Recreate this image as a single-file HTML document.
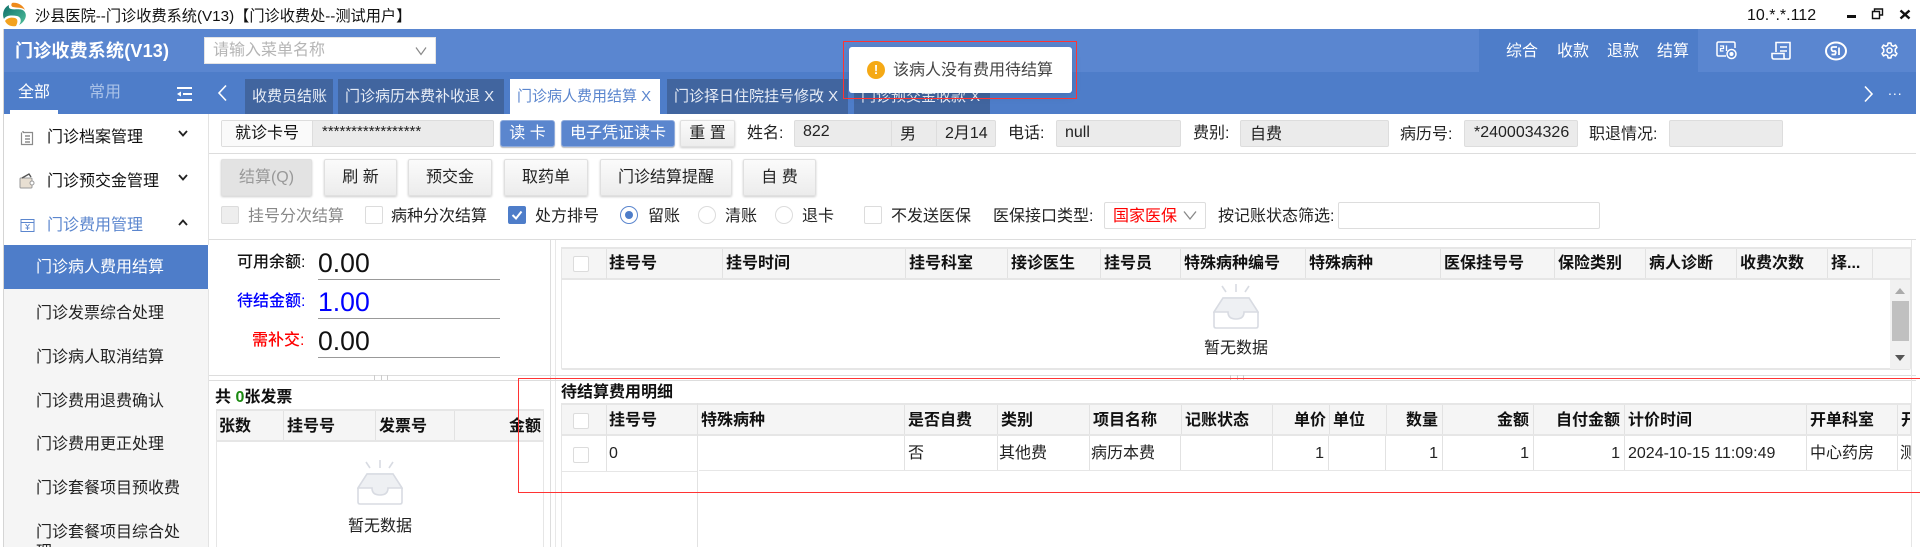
<!DOCTYPE html>
<html lang="zh"><head><meta charset="utf-8"><title>门诊收费系统</title>
<style>
html,body{margin:0;padding:0;width:1920px;height:547px;overflow:hidden;background:#fff}
body{position:relative;font:16px/20px "Liberation Sans","Noto Sans CJK SC",sans-serif;color:#222}
div,span,svg{position:absolute;box-sizing:border-box}
.t{white-space:nowrap;line-height:20px}
.b{font-weight:700;color:#111}
.w{color:#fff}
.tab{top:79px;height:35px;background:#41659f;color:#e8edf6;font-size:15px;line-height:35px;white-space:nowrap;padding-left:7px}
.f{top:120px;height:27px;background:#ebebeb;border:1px solid #ddd;border-radius:2px}
.bb{top:120px;height:27px;background:#5b86ce;border:1px solid #8fabdc;border-radius:3px;color:#fff;text-align:center;line-height:25px;box-shadow:0 1px 1px #bbb}
.g{top:159px;height:37px;border:1px solid #e0e0e0;border-radius:2px;background:linear-gradient(#fbfbfb,#ececec);text-align:center;line-height:35px;box-shadow:0 1px 2px #ccc}
.c{width:18px;height:18px;border:1px solid #dcdcdc;border-radius:2px;background:#fff}
.r{width:18px;height:18px;border:1px solid #dcdcdc;border-radius:50%;background:#fff}
.h{background:#f5f5f5;border:1px solid #e6e6e6;border-top:2px solid #e6e6e6;border-bottom:2px solid #e6e6e6}
.cell{top:0;bottom:0;border-right:1px solid #e2e2e2;font-weight:700;color:#111;padding-left:3px;white-space:nowrap;overflow:hidden}
.sm{left:4px;width:204px;height:44px;line-height:44px;padding-left:32px;white-space:nowrap;overflow:hidden}
.u{left:318px;width:182px;height:1px;background:#999}
.num{left:318px;font-size:26.6px;line-height:30px;white-space:nowrap}
.l{height:1px;background:#ddd}
.v{width:1px;background:#e2e2e2}
</style></head><body>

<!-- title bar -->
<svg style="left:2px;top:2px" width="25" height="25" viewBox="0 0 25 25">
<defs><linearGradient id="lg" x1="0" y1="0" x2="1" y2="1"><stop offset="0" stop-color="#0f6f6a"/><stop offset="1" stop-color="#4fbf9a"/></linearGradient></defs>
<path d="M7 3C1 6 0 13 2 17C4 13 10 13 15 14C19 15 20 19 17 23C23 20 26 13 22 9C19 6 13 8 9 7C7 6.500 6.500 5 7 3Z" fill="url(#lg)"/>
<path d="M10 1C15 0 21 3 23 8C20 5 15 6 11 5C9 4.500 9 2.500 10 1Z" fill="#ee8a1c"/>
<path d="M3 19C5 16 9 15 13 16C16 17 16 20 14 24C9 25 5 23 3 19Z" fill="#f3a21f"/>
</svg>
<div class="t" style="left:35px;top:7px;font-size:15.2px;color:#111">沙县医院--门诊收费系统(V13)【门诊收费处--测试用户】</div>
<div class="t" style="left:1747px;top:6px;font-size:16px;color:#111">10.*.*.112</div>
<div style="left:1847px;top:15px;width:9px;height:3px;background:#111"></div>
<svg style="left:1871px;top:8px" width="13" height="12"><path d="M3.500 3.500V1H11.500V7H9M1.500 3.500H8.500V10.500H1.500Z" fill="none" stroke="#111" stroke-width="1.400"/></svg>
<svg style="left:1899px;top:9px" width="12" height="11"><path d="M1.500 1.500L10.500 9.500M10.500 1.500L1.500 9.500" stroke="#111" stroke-width="2.400"/></svg>

<!-- left gray edge -->
<div style="left:3px;top:29px;width:1px;height:518px;background:#d5d5d5"></div>
<div style="left:4px;top:29px;width:1912px;height:43px;background:#5a86d0"></div>
<div style="left:4px;top:72px;width:1912px;height:42px;background:#4e7dc9"></div>
<div style="left:1479px;top:29px;width:219px;height:43px;background:#4e7dc9"></div>

<div class="t w" style="left:15px;top:41px;font-size:18px;font-weight:700;letter-spacing:.2px">门诊收费系统(V13)</div>
<div style="left:204px;top:37px;width:232px;height:27px;background:#fff;border:1px solid #e4e4e4"></div>
<div class="t" style="left:213px;top:41px;color:#b5b5b5">请输入菜单名称</div>
<svg style="left:414px;top:46px" width="14" height="10"><path d="M2 1.500L7 8.500L12 1.500" fill="none" stroke="#888" stroke-width="1.200"/></svg>

<div class="t w" style="left:1506px;top:42px">综合</div>
<div class="t w" style="left:1557px;top:42px">收款</div>
<div class="t w" style="left:1607px;top:42px">退款</div>
<div class="t w" style="left:1657px;top:42px">结算</div>

<!-- header icons -->
<svg style="left:1716px;top:41px" width="22" height="19" viewBox="0 0 22 19" fill="none" stroke="#fff" stroke-width="1.500">
<path d="M10 15H2.500Q1 15 1 13.500V2.500Q1 1 2.500 1H17.500Q19 1 19 2.500V7"/>
<path d="M4 5H7.500V7.500H4.500V10H7.500M10.500 4.500V10" stroke-width="1.300"/>
<circle cx="15.500" cy="13" r="4.500"/><circle cx="15.500" cy="13" r="1.300" fill="#fff"/>
</svg>
<svg style="left:1771px;top:41px" width="21" height="19" viewBox="0 0 21 19" fill="none" stroke="#fff" stroke-width="1.600">
<path d="M5 11V1.500H19V16.500Q19 18 17.500 18H3Q1 18 1 15.500V12.500H13V16.500Q13 18 15 18"/>
<path d="M9 6H16M9 10H16"/>
</svg>
<svg style="left:1825px;top:41px" width="22" height="20" viewBox="0 0 22 20" fill="none" stroke="#fff" stroke-width="2">
<ellipse cx="11" cy="10" rx="10" ry="8.500"/>
<path d="M12 6H8Q6 6 6.500 8.500T10 10Q11.500 11 10 13.500H6.500M14 6.500V14" stroke-width="1.800"/>
</svg>
<svg style="left:1881px;top:41px" width="17" height="19" viewBox="0 0 24 24" fill="none" stroke="#fff" stroke-width="2.200">
<circle cx="12" cy="12" r="3.500"/>
<path d="M10 1.500H14L14.800 4.800 17.500 6 20.400 4.300 22.500 7.700 20.200 10 20.200 14 22.500 16.300 20.400 19.700 17.500 18 14.800 19.200 14 22.500H10L9.200 19.200 6.500 18 3.600 19.700 1.500 16.300 3.800 14 3.800 10 1.500 7.700 3.600 4.300 6.500 6 9.200 4.800Z" stroke-linejoin="round"/>
</svg>

<!-- sidebar top -->
<div class="t w" style="left:18px;top:83px">全部</div>
<div class="t" style="left:89px;top:83px;color:#aac2e8">常用</div>
<div style="left:10px;top:110px;width:48px;height:4px;background:#fff"></div>
<svg style="left:177px;top:87px" width="16" height="14"><path d="M0 1H15M6 7H15M0 13H15" stroke="#fff" stroke-width="2"/><path d="M0 7L4 4.500V9.500Z" fill="#fff"/></svg>
<svg style="left:217px;top:84px" width="11" height="18"><path d="M9 1.500L2 9L9 16.500" fill="none" stroke="#fff" stroke-width="1.600"/></svg>

<!-- tabs -->
<div class="tab" style="left:245px;width:88px">收费员结账</div>
<div class="tab" style="left:338px;width:166px">门诊病历本费补收退 X</div>
<div class="tab" style="left:510px;width:150px;background:#fff;color:#5b86ce;padding-left:7px">门诊病人费用结算 X</div>
<div class="tab" style="left:667px;width:181px">门诊择日住院挂号修改 X</div>
<div class="tab" style="left:854px;width:136px">门诊预交金收款 X</div>
<svg style="left:1863px;top:85px" width="11" height="18"><path d="M2 1.500L9 9L2 16.500" fill="none" stroke="#fff" stroke-width="1.600"/></svg>
<div class="t w" style="left:1888px;top:80px;font-size:14px;letter-spacing:1px">...</div>

<!-- toast -->
<div style="left:849px;top:47px;width:223px;height:46px;background:#fff;border-radius:3px;box-shadow:0 2px 10px rgba(0,0,0,.12)"></div>
<div style="left:867px;top:61px;width:18px;height:18px;border-radius:50%;background:#f5a915;color:#fff;font:700 13px/18px 'Liberation Sans';text-align:center">!</div>
<div class="t" style="left:893px;top:61px;color:#444">该病人没有费用待结算</div>
<div style="left:843px;top:41px;width:234px;height:58px;border:1px solid #f33"></div>

<!-- sidebar -->
<div style="left:4px;top:114px;width:205px;height:131px;background:#fff;border-right:1px solid #e3e3e3"></div>
<div style="left:4px;top:245px;width:204px;height:44px;background:#4e7dc9"></div>
<div style="left:4px;top:289px;width:205px;height:258px;background:#f5f5f5;border-right:1px solid #e3e3e3"></div>

<svg style="left:20px;top:130px" width="14" height="16" fill="none" stroke="#777" stroke-width="1.200"><path d="M3 2.500H12.500V14.500H1.500V2.500" stroke="#8a8a8a"/><path d="M3 1V2.500M5 6H10M5 9H10M5 12H10" /></svg>
<svg style="left:19px;top:172px" width="16" height="17"><rect x="1" y="6" width="12" height="10" rx="1" fill="#e8dfd2" stroke="#999"/><path d="M3 6L10 2 12 5" fill="none" stroke="#555" stroke-width="1.400"/><circle cx="13" cy="11" r="2" fill="#fff" stroke="#999"/></svg>
<svg style="left:20px;top:218px" width="15" height="15" fill="none" stroke="#5b86ce"><rect x="1" y="1.500" width="13" height="12"/><path d="M1 4.500H14M5.500 6L7.500 8.500 9.500 6M7.500 8.500V12M5.500 10H9.500" stroke-width=".9"/></svg>

<div class="t" style="left:47px;top:128px;color:#111">门诊档案管理</div>
<div class="t" style="left:47px;top:172px;color:#111">门诊预交金管理</div>
<div class="t" style="left:47px;top:216px;color:#5b86ce">门诊费用管理</div>
<svg style="left:177px;top:129px" width="12" height="9"><path d="M2 2L6 6.500L10 2" fill="none" stroke="#222" stroke-width="1.800"/></svg>
<svg style="left:177px;top:173px" width="12" height="9"><path d="M2 2L6 6.500L10 2" fill="none" stroke="#222" stroke-width="1.800"/></svg>
<svg style="left:177px;top:218px" width="12" height="9"><path d="M2 7L6 2.500L10 7" fill="none" stroke="#222" stroke-width="1.800"/></svg>

<div class="sm w" style="top:247px;height:42px;line-height:42px">门诊病人费用结算</div>
<div class="sm" style="top:292px;color:#222">门诊发票综合处理</div>
<div class="sm" style="top:336px;color:#222">门诊病人取消结算</div>
<div class="sm" style="top:380px;color:#222">门诊费用退费确认</div>
<div class="sm" style="top:423px;color:#222">门诊费用更正处理</div>
<div class="sm" style="top:467px;color:#222">门诊套餐项目预收费</div>
<div class="sm" style="top:503px;height:44px;line-height:60px;color:#222">门诊套餐项目综合处</div>
<div class="t" style="left:36px;top:543px;color:#222">理</div>

<!-- row 1 -->
<div class="f" style="left:221px;width:273px;border-color:#ddd"></div>
<div style="left:222px;top:121px;width:91px;height:25px;background:#fafafa;border-right:1px solid #ddd;text-align:center;line-height:25px;color:#111">就诊卡号</div>
<div class="t" style="left:322px;top:124px;font-size:15px;color:#222;line-height:16px">*****************</div>
<div class="bb" style="left:500px;width:55px">读 卡</div>
<div class="bb" style="left:561px;width:114px">电子凭证读卡</div>
<div class="g" style="left:680px;top:120px;width:55px;height:27px;line-height:25px;color:#222">重 置</div>
<div class="t" style="left:747px;top:124px">姓名:</div>
<div class="f" style="left:794px;width:202px"></div>
<div class="v" style="left:891px;top:120px;height:27px;background:#ddd"></div>
<div class="v" style="left:936px;top:120px;height:27px;background:#ddd"></div>
<div class="t" style="left:803px;top:122px">822</div>
<div class="t" style="left:900px;top:125px">男</div>
<div class="t" style="left:945px;top:124px">2月14</div>
<div class="t" style="left:1008px;top:124px">电话:</div>
<div class="f" style="left:1056px;width:125px"></div>
<div class="t" style="left:1065px;top:123px">null</div>
<div class="t" style="left:1193px;top:124px">费别:</div>
<div class="f" style="left:1240px;width:149px"></div>
<div class="t" style="left:1250px;top:125px">自费</div>
<div class="t" style="left:1400px;top:125px">病历号:</div>
<div class="f" style="left:1464px;width:114px"></div>
<div class="t" style="left:1474px;top:123px">*2400034326</div>
<div class="t" style="left:1589px;top:125px">职退情况:</div>
<div class="f" style="left:1669px;width:114px"></div>
<div class="l" style="left:209px;top:153px;width:1707px"></div>

<!-- row 2 -->
<div class="g" style="left:221px;width:91px;background:#e3e3e3;color:#999">结算(Q)</div>
<div class="g" style="left:324px;width:73px">刷 新</div>
<div class="g" style="left:408px;width:84px">预交金</div>
<div class="g" style="left:504px;width:84px">取药单</div>
<div class="g" style="left:600px;width:132px">门诊结算提醒</div>
<div class="g" style="left:743px;width:73px">自 费</div>

<!-- row 3 -->
<div class="c" style="left:221px;top:206px;background:#eee"></div>
<div class="t" style="left:248px;top:207px;color:#888">挂号分次结算</div>
<div class="c" style="left:365px;top:206px"></div>
<div class="t" style="left:391px;top:207px">病种分次结算</div>
<div class="c" style="left:508px;top:206px;background:#4e7dc9;border-color:#4e7dc9"></div>
<svg style="left:508px;top:206px" width="18" height="18"><path d="M4.500 9L8 12.500L13.500 5.500" fill="none" stroke="#fff" stroke-width="2"/></svg>
<div class="t" style="left:535px;top:207px">处方排号</div>
<div class="r" style="left:620px;top:206px;border-color:#5b86ce"></div>
<div style="left:625px;top:211px;width:8px;height:8px;border-radius:50%;background:#4e7dc9"></div>
<div class="t" style="left:648px;top:207px">留账</div>
<div class="r" style="left:698px;top:206px"></div>
<div class="t" style="left:725px;top:207px">清账</div>
<div class="r" style="left:775px;top:206px"></div>
<div class="t" style="left:802px;top:207px">退卡</div>
<div class="c" style="left:864px;top:206px"></div>
<div class="t" style="left:891px;top:207px">不发送医保</div>
<div class="t" style="left:993px;top:207px">医保接口类型:</div>
<div style="left:1104px;top:202px;width:102px;height:27px;border:1px solid #ddd;border-radius:2px"></div>
<div class="t" style="left:1113px;top:207px;color:#f00">国家医保</div>
<svg style="left:1182px;top:210px" width="16" height="11"><path d="M2 1.500L8 9L14 1.500" fill="none" stroke="#888" stroke-width="1.300"/></svg>
<div class="t" style="left:1218px;top:207px">按记账状态筛选:</div>
<div style="left:1338px;top:202px;width:262px;height:27px;border:1px solid #ddd;border-radius:2px"></div>
<div class="l" style="left:209px;top:239px;width:1707px"></div>

<!-- split lines -->
<div class="v" style="left:550px;top:240px;height:307px;background:#ddd"></div>
<div class="v" style="left:555px;top:240px;height:307px;background:#e8e8e8"></div>
<div class="l" style="left:209px;top:375px;width:1707px"></div>
<div class="l" style="left:209px;top:380px;width:1707px"></div>
<div class="v" style="left:1911px;top:240px;height:307px;background:#e6e6e6"></div>
<div style="left:374px;top:375px;width:14px;height:5px;border-left:1px solid #ccc;border-right:1px solid #ccc;background:linear-gradient(90deg,transparent 6px,#ccc 6px,#ccc 7px,transparent 7px)"></div>
<div style="left:1230px;top:375px;width:14px;height:5px;border-left:1px solid #ccc;border-right:1px solid #ccc;background:linear-gradient(90deg,transparent 6px,#ccc 6px,#ccc 7px,transparent 7px)"></div>

<!-- left upper -->
<div class="t" style="left:237px;top:253px;color:#111;font-weight:500">可用余额:</div>
<div class="num" style="top:248px;color:#111">0.00</div>
<div class="u" style="top:279px"></div>
<div class="t" style="left:237px;top:292px;color:#00f;font-weight:500">待结金额:</div>
<div class="num" style="top:287px;color:#00f">1.00</div>
<div class="u" style="top:318px"></div>
<div class="t" style="left:252px;top:331px;color:#f00;font-weight:500">需补交:</div>
<div class="num" style="top:326px;color:#111">0.00</div>
<div class="u" style="top:357px"></div>

<!-- left lower -->
<div class="t b" style="left:215px;top:388px">共 <span style="position:static;color:#1a8a10">0</span>张发票</div>
<div style="left:216px;top:409px;width:328px;height:138px;border:1px solid #e6e6e6;border-bottom:0"></div>
<div class="h" style="left:216px;top:409px;width:328px;height:33px;line-height:31px">
<div class="cell" style="left:0;width:67px;padding-left:2px">张数</div>
<div class="cell" style="left:67px;width:92px">挂号号</div>
<div class="cell" style="left:159px;width:79px">发票号</div>
<div class="cell" style="left:238px;width:88px;border:0;text-align:right;padding-right:2px">金额</div>
</div>
<svg style="left:357px;top:459px" width="46" height="46" viewBox="0 0 46 46" fill="none" stroke="#d8dbe2" stroke-width="1.600">
<path d="M9 3L13 9M23 1V9M36 3L32 9" />
<path d="M10 15H36L45 29V43Q45 45 43 45H3Q1 45 1 43V29Z" fill="#fff"/>
<path d="M10 15H36L45 29H31Q31 36 23 36T15 29H1Z" fill="#eef0f3"/>
</svg>
<div class="t" style="left:348px;top:517px;color:#222">暂无数据</div>

<!-- right top table -->
<div style="left:561px;top:247px;width:1350px;height:123px;border:1px solid #e6e6e6;border-width:2px 1px;border-radius:2px"></div>
<div class="h" style="left:561px;top:247px;width:1350px;height:33px;line-height:29px">
<div class="cell" style="left:44px;width:117px">挂号号</div>
<div class="cell" style="left:161px;width:183px">挂号时间</div>
<div class="cell" style="left:344px;width:102px">挂号科室</div>
<div class="cell" style="left:446px;width:93px">接诊医生</div>
<div class="cell" style="left:539px;width:80px">挂号员</div>
<div class="cell" style="left:619px;width:125px">特殊病种编号</div>
<div class="cell" style="left:744px;width:135px">特殊病种</div>
<div class="cell" style="left:879px;width:114px">医保挂号号</div>
<div class="cell" style="left:993px;width:91px">保险类别</div>
<div class="cell" style="left:1084px;width:91px">病人诊断</div>
<div class="cell" style="left:1175px;width:91px">收费次数</div>
<div class="cell" style="left:1266px;width:45px">择...</div>
</div>
<div class="v" style="left:606px;top:249px;height:30px"></div>
<div class="c" style="left:573px;top:256px;width:16px;height:16px"></div>
<div style="left:1890px;top:280px;width:20px;height:89px;background:#f1f1f1"></div>
<div style="left:1892px;top:301px;width:17px;height:40px;background:#c0c0c0"></div>
<svg style="left:1895px;top:288px" width="10" height="7"><path d="M0 6H10L5 0Z" fill="#aaa"/></svg>
<svg style="left:1895px;top:355px" width="10" height="7"><path d="M0 0H10L5 6Z" fill="#555"/></svg>
<svg style="left:1213px;top:283px" width="46" height="46" viewBox="0 0 46 46" fill="none" stroke="#d8dbe2" stroke-width="1.600">
<path d="M9 3L13 9M23 1V9M36 3L32 9" />
<path d="M10 15H36L45 29V43Q45 45 43 45H3Q1 45 1 43V29Z" fill="#fff"/>
<path d="M10 15H36L45 29H31Q31 36 23 36T15 29H1Z" fill="#eef0f3"/>
</svg>
<div class="t" style="left:1204px;top:339px;color:#222">暂无数据</div>

<!-- right bottom table -->
<div class="t b" style="left:561px;top:383px">待结算费用明细</div>
<div class="h" style="left:561px;top:403px;width:1350px;height:33px;line-height:31px;overflow:hidden">
<div class="cell" style="left:44px;width:92px">挂号号</div>
<div class="cell" style="left:136px;width:207px">特殊病种</div>
<div class="cell" style="left:343px;width:93px">是否自费</div>
<div class="cell" style="left:436px;width:92px">类别</div>
<div class="cell" style="left:528px;width:92px">项目名称</div>
<div class="cell" style="left:620px;width:91px">记账状态</div>
<div class="cell" style="left:711px;width:57px;text-align:right;padding-right:3px">单价</div>
<div class="cell" style="left:768px;width:57px">单位</div>
<div class="cell" style="left:825px;width:56px;text-align:right;padding-right:4px">数量</div>
<div class="cell" style="left:881px;width:91px;text-align:right;padding-right:4px">金额</div>
<div class="cell" style="left:972px;width:91px;text-align:right;padding-right:4px">自付金额</div>
<div class="cell" style="left:1063px;width:182px">计价时间</div>
<div class="cell" style="left:1245px;width:91px">开单科室</div>
<div class="cell" style="left:1336px;width:13px">开单</div>
</div>
<div class="v" style="left:606px;top:405px;height:66px"></div>
<div class="c" style="left:573px;top:413px;width:16px;height:16px"></div>
<div class="c" style="left:573px;top:447px;width:16px;height:16px"></div>
<div class="l" style="left:561px;top:471px;width:136px;background:#e6e6e6"></div>
<div class="l" style="left:699px;top:470px;width:1212px;background:#e6e6e6"></div>
<div class="v" style="left:561px;top:436px;height:111px;background:#e6e6e6"></div>
<div class="v" style="left:697px;top:403px;height:144px"></div>
<div class="v" style="left:904px;top:436px;height:34px"></div>
<div class="v" style="left:997px;top:436px;height:34px"></div>
<div class="v" style="left:1089px;top:436px;height:34px"></div>
<div class="v" style="left:1180px;top:436px;height:34px"></div>
<div class="v" style="left:1272px;top:436px;height:34px"></div>
<div class="v" style="left:1328px;top:436px;height:34px"></div>
<div class="v" style="left:1385px;top:436px;height:34px"></div>
<div class="v" style="left:1442px;top:436px;height:34px"></div>
<div class="v" style="left:1533px;top:436px;height:34px"></div>
<div class="v" style="left:1624px;top:436px;height:34px"></div>
<div class="v" style="left:1806px;top:436px;height:34px"></div>
<div class="v" style="left:1897px;top:436px;height:34px"></div>
<div class="t" style="left:609px;top:444px">0</div>
<div class="t" style="left:908px;top:444px">否</div>
<div class="t" style="left:999px;top:444px">其他费</div>
<div class="t" style="left:1091px;top:444px">病历本费</div>
<div class="t" style="left:1300px;width:24px;text-align:right;top:444px">1</div>
<div class="t" style="left:1414px;width:24px;text-align:right;top:444px">1</div>
<div class="t" style="left:1505px;width:24px;text-align:right;top:444px">1</div>
<div class="t" style="left:1596px;width:24px;text-align:right;top:444px">1</div>
<div class="t" style="left:1628px;top:444px">2024-10-15 11:09:49</div>
<div class="t" style="left:1810px;top:444px">中心药房</div>
<div style="left:1900px;top:444px;width:11px;height:20px;overflow:hidden;line-height:20px;white-space:nowrap">测试</div>

<!-- red annotation -->
<div style="left:518px;top:378px;width:1410px;height:115px;border:1px solid #f33"></div>
</body></html>
